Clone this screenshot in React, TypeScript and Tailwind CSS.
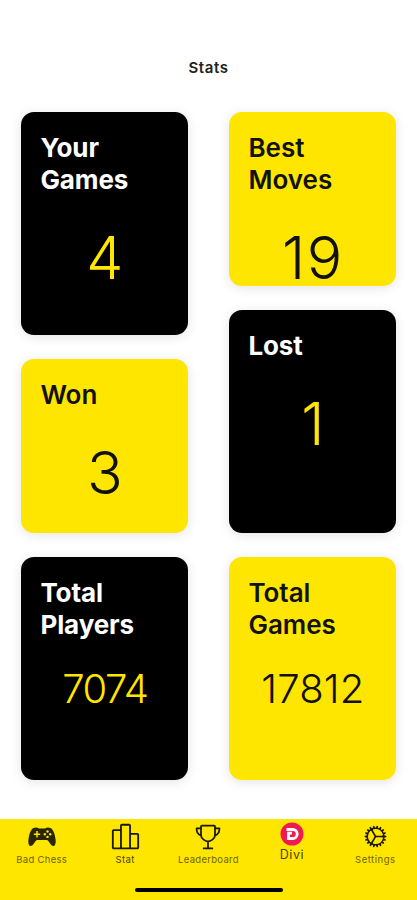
import { ReactNode } from 'react';
import { IoCogOutline, IoPodiumOutline, IoTrophyOutline } from 'react-icons/io5';
import clsx from 'clsx';

type CardProps = {
  title: ReactNode;
  value: string;
  dark?: boolean;
  className: string;
  valueClass: string;
};

function StatCard({ title, value, dark, className, valueClass }: CardProps) {
  return (
    <div
      className={clsx(
        'w-[167px] rounded-[13px] pl-[19px] pt-[19.5px] shadow-[0_2px_12px_rgba(0,0,0,0.11)]',
        dark ? 'bg-black' : 'bg-[#ffe600]',
        className
      )}
    >
      <h2
        className={clsx(
          'text-[26px] leading-8',
          dark ? 'font-bold tracking-[-0.1px] text-white' : 'font-semibold tracking-[0px] text-[#111]'
        )}
      >
        {title}
      </h2>
      <p
        className={clsx(
          'ml-[-19px] text-center',
          dark ? 'font-[350] text-[#ffe600]' : 'font-light text-[#111]',
          valueClass
        )}
      >
        {value}
      </p>
    </div>
  );
}

function GamepadIcon() {
  return (
    <svg className="h-[22px] w-[30px]" viewBox="0 0 30 22">
      <path
        d="M6.500 2c2-.9 4-.8 5.300.4h6.400c1.300-1.200 3.300-1.300 5.300-.4 2.600 1.100 4.300 6 5 11 .6 4.300-.2 7-2.200 7-2.500 0-4-4.600-6.100-6H9.800c-2.100 1.400-3.600 6-6.100 6-2 0-2.800-2.700-2.200-7C2.200 8 3.900 3.100 6.500 2Z"
        fill="#292600"
      />
      <path d="M10 5v6.400M6.800 8.200h6.400" stroke="#ffe600" strokeWidth="1.500" />
      <g fill="#ffe600">
        <circle cx="20.500" cy="5.500" r="1.200" />
        <circle cx="20.500" cy="10.900" r="1.200" />
        <circle cx="17.800" cy="8.200" r="1.200" />
        <circle cx="23.200" cy="8.200" r="1.200" />
      </g>
    </svg>
  );
}

function DiviIcon() {
  return (
    <svg className="mb-[5px] h-6 w-6" viewBox="0 0 24 24">
      <circle cx="12" cy="12" r="11.500" fill="#f01a50" />
      <path d="M6.500 7.500h6.200a4.500 4.500 0 0 1 0 9H8.500v-5.300h3.500" fill="none" stroke="#fff" strokeWidth="2.800" />
    </svg>
  );
}

const tabs = [
  { label: 'Bad Chess', icon: <GamepadIcon />, labelClass: 'text-[9.5px] tracking-[0.3px] text-[#6d6200]' },
  { label: 'Stat', icon: <IoPodiumOutline className="size-[29px]" />, labelClass: 'text-[9.5px] tracking-[0.4px] text-[#4a4300]' },
  { label: 'Leaderboard', icon: <IoTrophyOutline className="size-[28px]" />, labelClass: 'text-[9.5px] tracking-[0.3px] text-[#6d6200]' },
  { label: 'Divi', icon: <DiviIcon />, labelClass: 'text-[12.5px] tracking-[0.5px] text-[#4a4300] -mt-[5px]' },
  { label: 'Settings', icon: <IoCogOutline className="size-[27px]" />, labelClass: 'text-[9.5px] tracking-[0.5px] text-[#6d6200]' },
];

export default function App() {
  return (
    <div className="flex h-[900px] w-[417px] flex-col overflow-hidden bg-white font-[Inter,sans-serif]">
      <header className="flex h-28 shrink-0 justify-center pt-[57px]">
        <h1 className="text-[15px] font-semibold leading-[22px] tracking-[0.6px] text-[#222]">Stats</h1>
      </header>

      <main className="flex flex-1 justify-between pl-[21.4px] pr-[20.6px] pt-[0.4px]">
        <div className="flex flex-col gap-6">
          <StatCard dark title={<>Your<br />Games</>} value="4" className="h-[223px]" valueClass="pt-[27px] text-[59px] leading-[70px]" />
          <StatCard title="Won" value="3" className="h-[174px]" valueClass="pt-[27px] text-[59px] leading-[70px]" />
          <StatCard dark title={<>Total<br />Players</>} value="7074" className="h-[223px]" valueClass="pt-[24px] text-[40px] leading-[48px] tracking-[-1.4px]" />
        </div>
        <div className="flex flex-col gap-6">
          <StatCard title={<>Best<br />Moves</>} value="19" className="h-[174px]" valueClass="pt-[27px] text-[59px] leading-[70px] tracking-[1.5px]" />
          <StatCard dark title="Lost" value="1" className="h-[223px]" valueClass="pt-[27px] text-[59px] leading-[70px]" />
          <StatCard title={<>Total<br />Games</>} value="17812" className="h-[223px]" valueClass="pt-[24px] text-[40px] leading-[48px] tracking-[0.2px]" />
        </div>
      </main>

      <nav className="flex h-[81px] shrink-0 flex-col items-center bg-[#ffe600]">
        <div className="grid w-full grid-cols-5">
          {tabs.map((tab) => (
            <div key={tab.label} className="flex flex-col items-center text-[#1a1800]">
              <div className="flex h-[35px] items-center justify-center">{tab.icon}</div>
              <span className={clsx('leading-3', tab.labelClass)}>{tab.label}</span>
            </div>
          ))}
        </div>
        <div className="mb-2 mt-auto h-1 w-[148px] rounded-full bg-black" />
      </nav>
    </div>
  );
}
